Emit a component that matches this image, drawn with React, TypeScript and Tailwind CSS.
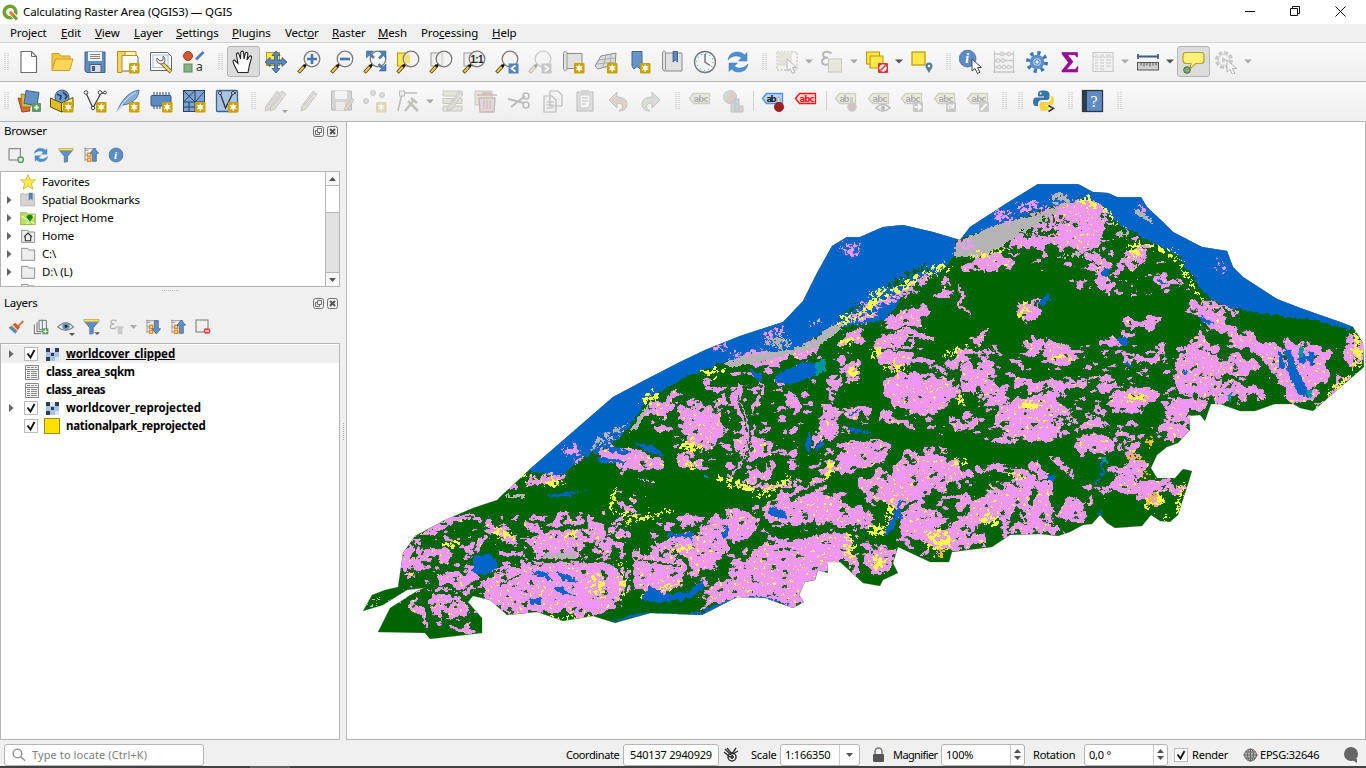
import React from 'react';

type Kids = { children?: React.ReactNode };

/* ---------- icon helpers ---------- */
const Ic = ({ children, s = 24, off = false }: Kids & { s?: number; off?: boolean }) => (
  <svg width={s} height={s} viewBox="0 0 24 24" fill="none" className={off ? 'shrink-0 opacity-35 grayscale-[40%]' : 'shrink-0'}>
    {children}
  </svg>
);
const NewBadge = () => (
  <g>
    <rect x="13" y="13" width="10.500" height="10.500" rx="1" fill="#c8a200" />
    <path d="M18.200 14.500v7.500M15 16.300l6.400 3.800M21.400 16.300L15 20.100" stroke="#fff" strokeWidth="1.100" />
    <circle cx="18.200" cy="18.200" r="1.900" stroke="#fff" strokeWidth="1" />
  </g>
);
const Lens = ({ children }: Kids) => (
  <g>
    <path d="M1.500 22.500l6.500-7" stroke="#3a3a2a" strokeWidth="3.400" />
    <path d="M2 22l4.600-5" stroke="#fbc63d" strokeWidth="2" />
    <path d="M7 16.500l3-3" stroke="#111" strokeWidth="2.400" />
    <circle cx="15" cy="9" r="7.800" fill="#f2f2f0" fillOpacity=".85" stroke="#7b7b7b" strokeWidth="1.300" />
    {children}
  </g>
);
const Refresh = () => (
  <g fill="#4f8fd0" stroke="#3a76b8" strokeWidth=".5">
    <path d="M2 10C3 4 7 2 11.500 2c3 0 5.500 1 7 3l2.500-2.500V11h-8.500l3-3C12 4.500 6 5.500 2 10z" />
    <path d="M22 14c-1 6-5 8-9.500 8-3 0-5.500-1-7-3L3 21.500V13h8.500l-3 3C12 19.500 18 18.500 22 14z" />
  </g>
);
const Pencil = ({ x = 0 }: { x?: number }) => (
  <g transform={`translate(${x} 0)`}>
    <path d="M5 17L16 2l4 3L9 20l-5 2z" fill="#b9b2a4" stroke="#7a7468" />
    <path d="M14 5l4 3" stroke="#eee" />
    <path d="M7 17L17 4" stroke="#8a8272" />
  </g>
);
const Tag = ({ c = '#8b8b5a', f = '#d3d3a8', t = 'abc', tc = '#333' }: { c?: string; f?: string; t?: string; tc?: string }) => (
  <g>
    <path d="M1.500 9.500L5.500 4.500h16v10h-16z" fill={f} stroke={c} strokeWidth="1.300" />
    <text x="5.500" y="12.500" fontSize="8.500" fontWeight="700" fill={tc} className="font-['DejaVu_Sans']" textLength={t.length > 2 ? 15 : 10}>{t}</text>
  </g>
);
const Funnel = () => (
  <g>
    <path d="M2 5h20l-7.500 9v8l-5 1v-9z" fill="#5f8fc4" stroke="#43719f" />
    <rect x="1.500" y="2" width="21" height="3.500" fill="#f7e463" stroke="#a39132" strokeWidth=".8" />
  </g>
);
const Info = () => (
  <g>
    <circle cx="12" cy="12" r="10.500" fill="#5d8cc4" stroke="#3f6ea8" />
    <text x="9" y="18" fontSize="17" fontWeight="700" fontStyle="italic" fill="#fff" className="font-['Liberation_Serif']">i</text>
  </g>
);
const Tree = ({ up }: { up?: boolean }) => (
  <g>
    <path d="M3 1v20M3 5h5M3 12h5M3 19h5" stroke="#9a9a9a" strokeWidth="1.500" />
    <path d="M2 2.500h18" stroke="#888" strokeWidth="1.200" />
    <rect x="7" y="9.500" width="4.500" height="4.500" fill="#fff" stroke="#f08a1d" strokeWidth="2.200" />
    <rect x="7" y="17" width="4.500" height="4.500" fill="#fff" stroke="#f08a1d" strokeWidth="2.200" />
    <path d={up ? 'M17 1.500l6.500 8H20v12h-6v-12h-3.500z' : 'M17 22.500l6.500-8H20v-12h-6v12h-3.500z'} fill="#5f8fc4" stroke="#34608f" />
  </g>
);
const Cursor = ({ x = 0, y = 0 }: { x?: number; y?: number }) => (
  <path transform={`translate(${x} ${y})`} d="M10 9v12l3-2.500 2.500 5 2.500-1.200-2.500-4.800h4z" fill="#fff" stroke="#444" strokeWidth="1" />
);
const Folder = () => <path d="M2.500 3.500h9l1.500 2.500h9v15.500h-19.500z" fill="#eee" stroke="#888" strokeWidth="1.400" />;
const Epsilon = () => <path d="M11.500 3.500C8 .5 3 1.500 3 4.500c0 2.500 2.500 3.200 5 3.200-3.500 0-6 1.300-6 4 0 3.500 5.500 4 9 1" stroke="#444" strokeWidth="2" />;

/* ---------- toolbar pieces ---------- */
const Btn = ({ children, on = false, off = false, arrow = '' }: Kids & { on?: boolean; off?: boolean; arrow?: '' | 'dark' | 'light' }) => (
  <div className={arrow ? 'flex w-[45px] shrink-0 items-center' : 'flex w-[33px] shrink-0 items-center'}>
    <div className={on ? 'flex h-[31px] w-[33px] items-center justify-center rounded-[3px] border border-[#b4b4b4] bg-[#dcdcdc]' : 'flex h-[31px] w-[33px] items-center justify-center'}>
      <Ic off={off}>{children}</Ic>
    </div>
    {arrow && (
      <svg width="8" height="5" className="ml-[1px]"><path d="M0 .5h8L4 4.500z" fill={arrow === 'dark' ? '#555' : '#aaa'} /></svg>
    )}
  </div>
);
const Grip = () => (
  <svg width="16" height="20" className="shrink-0">
    {[0, 2, 4, 6, 8, 10, 12, 14, 16].map((y) => (
      <g key={y} fill="#b9b9b9"><rect x="7.500" y={y + 1} width="1" height="1" /><rect x="10.500" y={y + 1} width="1" height="1" /></g>
    ))}
  </svg>
);
const Sep = () => <div className="flex w-[7px] shrink-0 justify-center"><div className="h-5 w-px bg-[#cfcfcf]" /></div>;

const Row1 = () => (
  <div className="flex h-[39px] items-center border-b border-[#b5b5b5] bg-linear-to-b from-[#fafafa] to-[#eeeeee] pb-px">
    <div className="-ml-[3.5px] flex"><Grip /></div>
    <Btn><path d="M4 1.500h10.500l5 5V22.500H4z" fill="#fff" stroke="#6f6f6f" strokeWidth="1.200" /><path d="M14.500 1.500v5h5" stroke="#6f6f6f" /></Btn>
    <Btn><path d="M2 20V3.500h7l2 2.500h9v3" fill="#f4c63d" stroke="#c99c2c" /><path d="M2 20.500L5.500 9H23l-3.500 11.500z" fill="#fcd656" stroke="#c99c2c" /></Btn>
    <Btn><path d="M2 2h20v20.500H4L2 21z" fill="#5f8cbf" stroke="#3f5f88" /><rect x="5" y="2" width="14" height="9" fill="#f2f2f2" /><path d="M7 4.500h10M7 6.500h10M7 8.500h10" stroke="#777" strokeWidth=".9" /><rect x="7" y="14.500" width="11" height="8" fill="#ddd" stroke="#46617f" /><rect x="9" y="16" width="3" height="5" fill="#3b5c86" /></Btn>
    <Btn><path d="M5 3h13l4 4v14H5z" fill="#fff" stroke="#666" /><path d="M1.500 1.500h8v4H6v17H1.500z" fill="#f5d465" stroke="#b58f1f" /><path d="M9 1.500h11v4H9z" fill="#fff3c0" stroke="#b58f1f" /><NewBadge /></Btn>
    <Btn><path d="M1.500 2.500h17l4 4v14h-21z" fill="#fff" stroke="#666" /><rect x="4" y="5" width="15" height="12.500" stroke="#9ebce0" /><path d="M12.500 12.500L22 22" stroke="#7d6b1e" strokeWidth="4" /><path d="M13 13l8.500 8.500" stroke="#f2dd85" strokeWidth="2.200" /><path d="M8 8c-1 4 2 7 5.500 5.500s3-5.500.5-7.500v4l-3 1z" fill="#f0f0f0" stroke="#666" /></Btn>
    <Btn><circle cx="6" cy="6" r="4.500" fill="#d2562f" stroke="#a8401d" /><path d="M14 9.500l7.500-7.500" stroke="#4f7db3" strokeWidth="2.600" /><rect x="2" y="14" width="8" height="8" fill="#86b285" stroke="#5a8a5a" /><text x="14" y="21" fontSize="12" fill="#333" className="font-['Noto_Sans'] leading-none">a</text></Btn>
    <Grip />
    <Btn on><path d="M7 22.500L3 14.500c-2-4-.5-5.500 1.500-3.500L7 13.500 5.500 5c-.4-2.500 2-3 2.600-.6L9.500 9 9.800 2.800c.1-2.300 2.700-2.200 2.800 0L13 9l1.200-5.200c.6-2.200 2.900-1.500 2.600.5L16 10l2.200-3.300c1.200-1.700 2.900-.6 2.200 1.200L18.500 15 17 22.500z" fill="#fff" stroke="#222" strokeWidth="1.100" /></Btn>
    <Btn><rect x="2.500" y="2.500" width="13" height="13" fill="#fde74c" stroke="#b89a00" /><path d="M12 1l4 4.500h-2.500V10H18V7.500l5 4.500-5 4.500V14h-4.500v4.500H16L12 23l-4-4.500h2.500V14H6v2.500L1 12l5-4.500V10h4.500V5.500H8z" fill="#5b87bd" stroke="#2f567f" strokeWidth=".8" /></Btn>
    <Btn><Lens><path d="M15 4v10M10 9h10" stroke="#4277b3" strokeWidth="2.600" /></Lens></Btn>
    <Btn><Lens><path d="M10 9h10" stroke="#4277b3" strokeWidth="2.600" /></Lens></Btn>
    <Btn><Lens /><path d="M3.500 1h7L8 3.500 11.500 7 10 8.500 6.500 5 3.500 8zM23 1v7l-2.500-2.500L17 9l-1.500-1.500L19 4l-3-3zM23 21h-7l2.500-2.500L15 15l1.500-1.500L20 17l3-3z" fill="#4f80b8" stroke="#2f5b8c" strokeWidth=".5" /></Btn>
    <Btn><rect x="1.500" y="3" width="12" height="13" fill="#fde74c" stroke="#b89a00" /><Lens><path d="M9 5h5v8H9z" fill="#f2dd78" /></Lens></Btn>
    <Btn><rect x="2" y="3" width="12" height="13" fill="#eee" stroke="#999" /><Lens><path d="M13 3v12" stroke="#ccc" /></Lens></Btn>
    <Btn><rect x="2" y="3" width="12" height="13" fill="#eee" stroke="#999" /><Lens><text x="8.500" y="12.500" fontSize="10" fontWeight="700" fill="#222" textLength="13" className="font-['Liberation_Sans']">1:1</text></Lens></Btn>
    <Btn><Lens /><rect x="13.500" y="13.500" width="10" height="10" fill="#5182bb" /><path d="M20.500 15.500l-4 3 4 3" stroke="#fff" strokeWidth="1.800" /></Btn>
    <Btn off><Lens /><rect x="13.500" y="13.500" width="10" height="10" fill="#777" /><path d="M16.500 15.500l4 3-4 3" stroke="#fff" strokeWidth="1.800" /></Btn>
    <Btn><path d="M2.500 3.500c0-3 3.500-2.500 3.500 0h15v15H6c0 3-3.500 3-3.500 0z" fill="#e1e1e1" stroke="#8b8b8b" /><path d="M6 3.500v15" stroke="#999" /><NewBadge /></Btn>
    <Btn><path d="M1 16L7 6l15-3-1 13-10 1-7 2z" fill="#ddd" stroke="#8a8a8a" /><path d="M5 10l16-2M3 14l17-2M12 5L9 17M17 4l-1 12" stroke="#aaa" /><NewBadge /></Btn>
    <Btn><path d="M5 1.500h10V20l-5-3.500L7 19l-2-3z" fill="#6793c8" stroke="#41698f" /><NewBadge /></Btn>
    <Btn><path d="M2.500 3c0-2.500 3-2.500 3 0h16.500v18H4l-1.500-2z" fill="#e1e1e1" stroke="#8b8b8b" /><path d="M5.500 3v17" stroke="#999" /><path d="M13 1.500h4.500V12l-2.200-2L13 12z" fill="#5b8ac0" stroke="#2f567f" strokeWidth=".8" /></Btn>
    <Btn><circle cx="12" cy="12" r="10.500" fill="#f4f4f4" stroke="#777" strokeWidth="1.300" /><circle cx="12" cy="12" r="8.300" stroke="#6fa0d6" strokeWidth="1.200" strokeDasharray="1 3.350" /><path d="M12 4v8l5 3.500" stroke="#777" strokeWidth="1.500" /></Btn>
    <Btn><Refresh /></Btn>
    <Grip />
    <Btn off arrow="light"><rect x="2" y="2" width="20" height="18" stroke="#444" strokeDasharray="2 1.500" /><rect x="2" y="2" width="15" height="14" fill="#c9c79c" /><Cursor x={2} /></Btn>
    <Btn off arrow="light"><Epsilon /><rect x="8.500" y="9" width="13" height="13" fill="#d5d3a0" stroke="#777" /></Btn>
    <Btn arrow="dark"><rect x="1.500" y="2" width="13" height="12" fill="#fde74c" stroke="#b89a00" /><rect x="5" y="6" width="13" height="12" fill="#fde74c" stroke="#b89a00" /><rect x="13" y="13" width="10" height="10" rx="1" fill="#d8333a" /><circle cx="18" cy="18" r="3.300" fill="#fff" stroke="#ffdada" /><path d="M15.500 20.500l5-5" stroke="#d8333a" strokeWidth="1.600" /></Btn>
    <Btn><rect x="2" y="2" width="13" height="13" fill="#fde74c" stroke="#b89a00" strokeWidth="1.200" /><path d="M19 23c-1.500-3-3.500-4.500-3.500-7a3.500 3.500 0 017 0c0 2.500-2 4-3.500 7z" fill="#55809d" /><circle cx="19" cy="16" r="1.200" fill="#fff" /></Btn>
    <Grip />
    <Btn><g transform="translate(-1 -1) scale(.8)"><Info /></g><Cursor x={3} /></Btn>
    <Btn off><path d="M2.500 1v22M21.500 1v22M1 22h22M2.500 4h19M2.500 10.500h19M2.500 17h19" stroke="#777" strokeWidth="1.300" /><g fill="#ddd" stroke="#777"><circle cx="10" cy="4" r="2" fill="#e8b0b0" /><circle cx="17" cy="4" r="2" fill="#e8b0b0" /><circle cx="6" cy="10.500" r="2" fill="#b0d8b0" /><circle cx="11" cy="10.500" r="2" fill="#b0d8b0" /><circle cx="7" cy="17" r="2" /><circle cx="12" cy="17" r="2" /><circle cx="17" cy="17" r="2" /></g></Btn>
    <Btn><circle cx="12" cy="12" r="9" stroke="#3f76b7" strokeWidth="4" strokeDasharray="3.200 3.870" /><circle cx="12" cy="12" r="5.500" fill="#b9d2ef" stroke="#5c90cc" strokeWidth="3.500" /><circle cx="12" cy="12" r="2.200" fill="#f5f5f5" stroke="#3f76b7" /></Btn>
    <Btn><path d="M4 2.500h15.500V7h-1c-.5-2-1.500-2.300-3-2.300H9.500l5.500 7-6.500 7.800h7.500c2 0 2.500-1 3-2.700h1L19.500 22H4v-1.500L10.500 12.500 4 4z" fill="#a1069c" stroke="#6e006b" strokeWidth=".5" /></Btn>
    <Btn off arrow="light"><rect x="2" y="2.500" width="20" height="19" fill="#eee" stroke="#777" /><path d="M2 7h20M4 5h3M9 5h4M15 5h5M4 10h3M9 10h4M15 10h5M4 13h3M9 13h4M15 13h5M4 16h3M9 16h4M15 16h5M4 19h3M9 19h4" stroke="#777" /></Btn>
    <Btn arrow="dark"><path d="M2 6.500h20M2 4v5M22 4v5" stroke="#3f5f85" strokeWidth="1.800" /><rect x="1.500" y="12.500" width="21" height="7.500" fill="#cfcfcf" stroke="#555" /><path d="M5 12.500v3M8 12.500v4M11 12.500v3M14 12.500v4M17 12.500v3M20 12.500v3" stroke="#555" /></Btn>
    <Btn on><path d="M5 2.500h15q3 0 3 3v5q0 3-3 3h-5l-6 5 1-5H5q-3 0-3-3v-5q0-3 3-3z" fill="#fdf07a" stroke="#b0a136" strokeWidth="1.200" /><circle cx="6" cy="20" r="3.300" fill="#7cac72" stroke="#44693c" /></Btn>
    <Btn off arrow="light"><circle cx="10" cy="10" r="7.500" stroke="#777" strokeWidth="3" strokeDasharray="4 1.890" /><circle cx="10" cy="10" r="5.500" fill="#f4f4f4" stroke="#777" /><path d="M8 7l5 3-5 3z" fill="#777" /><Cursor x={3} y={1} /></Btn>
  </div>
);

const Row2 = () => (
  <div className="flex h-[40px] items-center border-b border-[#b5b5b5] bg-linear-to-b from-[#fafafa] to-[#eeeeee] pb-px">
    <div className="-ml-[3.5px] flex"><Grip /></div>
    <Btn><path d="M1 9l11 2 1 11-8 1z" fill="#d36a3a" stroke="#9d4b24" /><path d="M4 5l10 1v12H5z" fill="#e2b93d" stroke="#9a7b17" /><path d="M9 1.500l13 2-2 13-13-2z" fill="#6590c5" stroke="#3d648f" /><rect x="15" y="14" width="9" height="9" rx="1" fill="#5a9b63" /><path d="M19.500 16v5M17 18.500h5" stroke="#fff" strokeWidth="1.600" /></Btn>
    <Btn><circle cx="12" cy="8" r="7" fill="#6d9bd0" stroke="#375877" /><path d="M7 5l4 2-1 4M13 3l4 4-2 3" stroke="#2e4764" strokeWidth="1.800" /><path d="M.5 9l11 5v9L.5 18z" fill="#e2bb20" stroke="#5e4e0c" /><path d="M11.500 14L23 8.500V18l-11.500 5z" fill="#fbe96b" stroke="#5e4e0c" /><NewBadge /></Btn>
    <Btn><path d="M3 4l7 15 8-15M18 4h4" stroke="#444" strokeWidth="1.300" /><g fill="#fff" stroke="#444"><circle cx="3" cy="3.500" r="1.800" /><circle cx="10" cy="19" r="1.800" /><circle cx="17" cy="3.500" r="1.800" /><circle cx="22" cy="3.500" r="1.400" /></g><NewBadge /></Btn>
    <Btn><path d="M1 23C5 12 12 3 23 1c0 8-7 14-16 15" fill="#86acd8" stroke="#4b759f" /><path d="M1 23C6 14 13 7 20 3" stroke="#dce9f7" /><NewBadge /></Btn>
    <Btn><path d="M5 3v17M8 3v17M11 3v17M14 3v17M17 3v17M20 3v17" stroke="#46617f" strokeWidth="1.200" /><rect x="2" y="6.500" width="20" height="10.500" rx="1" fill="#5c8bc2" stroke="#38597f" /><NewBadge /></Btn>
    <Btn><rect x="1.500" y="1.500" width="21" height="21" fill="#7ba3d3" stroke="#29435f" /><path d="M1.500 13h21M13 1.500v21M1.500 1.500L13 13M13 1.500L1.500 13M13 13l9-10M7 13v10M1.500 18H13" stroke="#29435f" strokeWidth="1" /><NewBadge /></Btn>
    <Btn><rect x="1.500" y="1.500" width="21" height="21" rx="1" fill="#a9c4e4" stroke="#3d648f" strokeWidth="1.300" /><path d="M5 4l5.500 15L18 4h3" stroke="#333" strokeWidth="1.300" /><circle cx="5" cy="4" r="1.500" fill="#fff" stroke="#333" /><circle cx="18" cy="4" r="1.500" fill="#fff" stroke="#333" /><NewBadge /></Btn>
    <Grip />
    <Btn off><Pencil x={-3} /><Pencil x={2} /><path d="M18 21h6l-3 3z" fill="#111" /></Btn>
    <Btn off><Pencil /></Btn>
    <Btn off><path d="M1.500 2h20v19h-20z" fill="#999" stroke="#555" /><rect x="5" y="2" width="12" height="8" fill="#eee" /><rect x="6" y="13" width="9" height="8" fill="#ddd" /><path d="M14 20l8-11 2 2-8 11z" fill="#c97" stroke="#765" /></Btn>
    <Btn off><g fill="#aaa" stroke="#777"><circle cx="3" cy="12" r="2.500" /><circle cx="10" cy="4" r="2.500" /><circle cx="19" cy="6" r="2.500" /></g><NewBadge /></Btn>
    <Btn off arrow="light"><path d="M2 22L6 4h15" stroke="#555" strokeWidth="1.500" /><rect x="3.500" y="2" width="5" height="5" fill="#ddd" stroke="#555" /><path d="M9 22l9-11M12 12l10 10M15 9l6 5" stroke="#665" strokeWidth="2.500" /></Btn>
    <Btn off><path d="M2 2h19v5H2zM2 9.500h19v5H2zM2 17h19v5H2z" fill="#c9c58e" stroke="#777" /><Pencil x={2} /></Btn>
    <Btn off><path d="M1 2h17v14H1z" fill="#c9c58e" stroke="#777" /><path d="M5 9h16l-1 14H6zM3 6h20M9 6V4h8v2" fill="#dba0a0" stroke="#944" strokeWidth="1.400" /><path d="M10 11v9M13 11v9M16 11v9" stroke="#944" /></Btn>
    <Btn off><path d="M1 10l16 4M4 18L18 7" stroke="#555" strokeWidth="2" /><circle cx="19" cy="7" r="3" stroke="#555" strokeWidth="1.600" /><circle cx="19" cy="16" r="3" stroke="#555" strokeWidth="1.600" /></Btn>
    <Btn off><path d="M10 2h8l4 4v11H10zM4 7h8l4 4v12H4z" fill="#eee" stroke="#555" strokeWidth="1.200" /><path d="M6.500 13h7M6.500 16h7M6.500 19h7" stroke="#555" /></Btn>
    <Btn off><rect x="4" y="3" width="16" height="19" fill="#bbb" stroke="#555" /><path d="M7 6h10v10l-3 3H7z" fill="#fff" stroke="#777" /><rect x="8" y="1" width="8" height="4" fill="#999" /><path d="M9 9h6M9 12h6M9 15h4" stroke="#555" /></Btn>
    <Btn off><path d="M3 11l8-8v5c8 0 10 4 10 8-.5 4-4 6-8 6 5-3 5-8-2-8v5z" fill="#c0907a" stroke="#765" /></Btn>
    <Btn off><path d="M21 11l-8-8v5C5 8 3 12 3 16c.5 4 4 6 8 6-5-3-5-8 2-8v5z" fill="#99b996" stroke="#676" /></Btn>
    <Grip />
    <Btn off><Tag /></Btn>
    <Btn off><circle cx="9" cy="8" r="6.500" fill="#c77" stroke="#777" /><path d="M9 8V1.500A6.500 6.500 0 003 11z" fill="#7a8" /><path d="M10 13h4v10h-4z" fill="#7a8" stroke="#676" /><path d="M14 10h4v13h-4z" fill="#79a" stroke="#667" /><path d="M18 17h4v6h-4z" fill="#c88" stroke="#766" /></Btn>
    <Sep />
    <Btn><Tag c="#4d94e0" f="#b5d5fa" t="ab" tc="#222" /><rect x="16" y="8" width="3" height="7" rx="1.500" fill="#ddd" stroke="#888" strokeWidth=".6" /><circle cx="18" cy="18" r="4.700" fill="#a01f22" stroke="#711" strokeWidth=".6" /></Btn>
    <Btn><Tag c="#f01414" f="#ffd9d9" tc="#f01414" /></Btn>
    <Sep />
    <Btn off><Tag t="ab" /><circle cx="18" cy="18" r="4.700" fill="#a66" /><rect x="16" y="8" width="3" height="7" fill="#888" /></Btn>
    <Btn off><Tag /><path d="M9 19q7-7 14 0q-7 6-14 0z" fill="#eee" stroke="#555" strokeWidth="1.400" /><circle cx="16" cy="19" r="2" fill="#444" /></Btn>
    <Btn off><Tag /><rect x="13" y="13" width="10" height="10" rx="1" fill="#777" /><path d="M14.500 18h6M18 15l3 3-3 3" stroke="#fff" strokeWidth="1.800" /></Btn>
    <Btn off><Tag /><rect x="13" y="13" width="10" height="10" rx="1" fill="#777" /><path d="M16 20.500c-2-4 1-6 4-3M20.500 15v3.500H17" stroke="#fff" strokeWidth="1.500" /></Btn>
    <Btn off><Tag /><rect x="13" y="13" width="10" height="10" rx="1" fill="#887" /><path d="M15 21l5.500-6" stroke="#fff" strokeWidth="2" /></Btn>
    <Grip />
    <Grip />
    <div className="w-[1px] shrink-0" />
    <Btn><path d="M11 1.500c-4 0-5 1.500-5 3.500v2.500h6v1H4c-2 0-3 2-3 4.500S2 17 4 17h2v-2.500C6 12.500 8 11 10 11h5c1.500 0 2.500-1.500 2.500-2.500V5c0-2-2-3.500-6.500-3.500z" fill="#3b76a8" /><circle cx="8.700" cy="4.500" r="1" fill="#fff" /><path d="M19 7v2.500c0 2-1.500 3.500-3.500 3.500h-5C8.500 13 7.500 14 7.500 15.500V19c0 2 2.500 3 5 3s4.500-1 4.500-3v-2h-4v-1h6c2.500 0 3-2 3-4.500S21.500 7 19 7z" fill="#ffd340" /><path d="M16.500 16.500l5 3-5 3" stroke="#333" strokeWidth="1.500" /></Btn>
    <Grip />
    <Btn><rect x="1.500" y="1.500" width="20" height="21" fill="#5e8bc2" stroke="#33373d" strokeWidth="1.300" /><rect x="2" y="2" width="4" height="20" fill="#2c3e50" /><text x="9.500" y="18" fontSize="16" fill="#fff" className="font-['Liberation_Serif']">?</text></Btn>
    <Grip />
  </div>
);

/* ---------- map ---------- */
const OUTLINE =
  '363,611 372,595 385,590 398,587 403,553 415,536 445,520 473,508 497,500 530,469 583,423 613,397 645,380 680,362 705,350 740,336 783,322 803,301 817,273 832,246 847,237 860,237 883,227 903,225 933,232 960,240 970,227 1007,203 1038,184 1078,184 1093,192 1108,193 1117,197 1141,197 1147,207 1163,222 1173,232 1202,247 1227,251 1233,267 1243,277 1277,299 1303,309 1343,323 1353,327 1363,343 1364,367 1313,411 1300,408 1293,404 1275,404 1255,411 1240,411 1220,404 1211,404 1205,421 1200,415 1189,416 1190,430 1178,443 1167,447 1157,455 1151,468 1157,478 1175,478 1183,469 1192,471 1187,487 1178,515 1170,522 1160,521 1151,515 1142,526 1115,528 1107,523 1100,515 1092,524 1083,525 1070,532 1058,536 1040,534 1010,535 992,547 952,552 949,562 930,562 898,547 893,563 898,573 883,580 880,586 863,583 852,573 840,562 827,562 828,573 818,570 815,580 805,582 799,595 804,602 793,608 765,598 737,597 702,615 650,613 615,623 593,616 563,621 537,612 507,615 490,600 473,596 468,602 482,618 482,633 430,639 425,633 378,632 390,608 417,591 424,588 407,590 383,605';

const RIVER = [
  '525,465 583,415 640,375 783,315 800,295 830,240 903,220 955,236 958,252 940,272 913,283 900,300 885,320 850,326 825,332 795,350 723,363 703,369 680,380 662,391 645,403 633,422 610,447 580,458 562,476 530,471',
  '957,240 970,225 1038,180 1150,190 1240,250 1250,280 1360,325 1350,330 1320,321 1287,317 1227,307 1207,297 1190,272 1180,258 1153,242 1117,224 1100,203 1083,199 1050,207 1020,218 990,228',
];

type E = [number, number, number, number, number?];
const CROPS: E[] = [
  [438, 600, 9, 13], [458, 606, 10, 13], [462, 580, 26, 9], [655, 575, 31, 23], [680, 545, 24, 9], [688, 521, 14, 6],
  [408, 556, 6, 20, 15], [447, 525, 29, 4, -22], [435, 554, 18, 6], [477, 543, 5, 9, 30], [503, 535, 17, 6, 25], [533, 528, 11, 4, 25],
  [563, 518, 8, 4], [595, 530, 8, 14], [617, 530, 8, 5], [612, 547, 14, 7], [515, 489, 20, 7], [548, 480, 20, 6, -5],
  [630, 458, 31, 10, 12], [664, 429, 11, 4], [660, 407, 17, 7, -30], [410, 577, 7, 3, -40], [421, 612, 5, 16, -22], [460, 630, 9, 3],
  [572, 452, 8, 4], [703, 428, 24, 19], [690, 462, 15, 5, 20], [755, 447, 20, 12], [757, 474, 20, 6, -15], [740, 412, 4, 20, -15], [750, 440, 3, 18, 15],
  [762, 487, 32, 3, 0], [720, 396, 4, 9], [738, 400, 5, 14], [758, 400, 4, 15, 25], [792, 405, 6, 11, 15],
  [800, 350, 24, 8, -20], [775, 358, 30, 6, -8], [908, 318, 26, 8, -18], [902, 338, 28, 8, -10], [853, 338, 16, 7, -20],
  [895, 358, 18, 8], [915, 390, 35, 17, 12], [940, 385, 16, 11], [975, 377, 18, 14, -40], [957, 362, 14, 6, -15], [833, 380, 9, 6],
  [852, 370, 6, 10], [700, 412, 22, 9], [830, 413, 12, 5], [858, 412, 12, 6], [990, 262, 25, 9, -8], [965, 300, 3, 16, -18],
  [1030, 310, 15, 6, -30], [942, 290, 9, 5], [980, 335, 11, 4, -20], [985, 352, 10, 5], [1000, 400, 9, 13], [1030, 405, 20, 9], [1035, 345, 10, 7],
  [1092, 256, 10, 8], [1102, 270, 6, 10], [1106, 284, 11, 7], [1133, 258, 18, 9], [1163, 280, 9, 5], [1140, 322, 19, 5], [1213, 320, 29, 10, 28],
  [1218, 306, 18, 3, 10], [1110, 344, 14, 7], [1128, 336, 9, 4], [1060, 352, 17, 8], [1037, 344, 11, 8], [1137, 362, 13, 7], [1157, 360, 8, 7],
  [1200, 370, 26, 27], [1237, 367, 20, 10], [1235, 393, 33, 8], [1250, 344, 24, 7, 18], [1353, 353, 7, 17], [1335, 390, 3, 26, 42],
  [1107, 382, 16, 6, 10], [1060, 386, 30, 6, -5], [1133, 400, 23, 10], [1183, 408, 22, 10, -15], [1200, 340, 6, 8], [1030, 382, 20, 5],
  [1035, 418, 36, 22], [1092, 420, 19, 8, -15], [1175, 428, 14, 14], [1097, 447, 20, 9], [1122, 438, 11, 5], [1052, 468, 20, 11, 12],
  [1133, 452, 10, 7], [1128, 469, 17, 9], [1137, 488, 30, 10, 8], [1170, 484, 14, 5], [1035, 500, 17, 24], [1076, 502, 19, 10, -35], [1065, 515, 23, 6],
  [1105, 492, 7, 4], [1035, 527, 25, 8], [867, 450, 23, 14], [843, 463, 20, 12, -20], [823, 430, 7, 20, 20], [837, 418, 3, 15, 22], [927, 472, 38, 19],
  [893, 488, 33, 17], [800, 507, 40, 15, -12], [845, 517, 27, 12], [735, 523, 24, 14], [920, 522, 23, 15], [705, 550, 22, 22], [880, 560, 15, 13],
  [855, 565, 7, 14], [955, 540, 33, 9], [1000, 500, 40, 14, -10], [1015, 417, 19, 15], [963, 425, 15, 6], [915, 405, 27, 8], [1005, 442, 11, 6],
  [937, 445, 9, 5], [873, 427, 8, 6], [810, 488, 18, 7, -20], [990, 470, 12, 4], [1020, 475, 12, 7], [897, 420, 20, 3, 25], [975, 520, 26, 8, -20],
  [645, 490, 10, 5], [630, 506, 10, 5], [1153, 505, 9, 8], [985, 385, 10, 14], [1163, 350, 6, 4],
];
const CROP_AREAS = [
  '498,566 530,563 597,559 617,564 625,580 621,602 603,614 563,614 537,612 507,616 488,602 480,588',
  '530,543 545,535 578,531 586,545 586,559 530,560',
  '1010,237 1047,208 1083,197 1100,203 1111,220 1102,242 1080,252 1050,248 1008,247',
  '1266,343 1287,340 1310,346 1314,354 1334,346 1327,378 1312,403 1297,409 1281,390 1268,365',
  '698,612 720,575 745,556 785,537 830,530 852,540 852,562 830,567 817,584 800,602 793,614 765,602 737,600 712,608',
];
const GRASS: E[] = [
  [650, 398, 9, 5, -25], [553, 483, 10, 4], [527, 478, 6, 3], [850, 545, 3, 12], [880, 562, 6, 9], [940, 540, 14, 10], [890, 512, 3, 16, 15],
  [690, 447, 9, 7], [740, 485, 24, 3, 18], [775, 487, 22, 3, -30], [690, 465, 7, 4], [877, 353, 6, 5], [895, 368, 12, 4], [853, 372, 5, 8, -20],
  [846, 320, 5, 8, 20], [870, 305, 26, 3, -45], [897, 290, 30, 4, -30], [930, 272, 22, 4, -20], [873, 304, 4, 14, 10], [712, 372, 12, 3], [846, 342, 7, 4],
  [990, 253, 20, 2, -10], [1090, 202, 10, 4, 15], [1110, 215, 12, 2, 50], [1163, 250, 18, 3, 15], [1136, 250, 6, 8], [1185, 272, 18, 1.500, 58], [1195, 290, 14, 1.500, 52],
  [1357, 350, 4, 17], [1335, 392, 2, 28, 42], [1157, 500, 8, 6], [1147, 505, 5, 4], [1180, 500, 2, 18, 15], [1168, 521, 8, 2],
  [1060, 357, 13, 2], [1030, 405, 10, 4], [1138, 398, 12, 4], [960, 462, 8, 4], [875, 530, 9, 6], [680, 548, 12, 3], [613, 500, 2, 14], [650, 516, 26, 2, -15],
  [630, 515, 15, 2, 15], [505, 535, 12, 4, 25], [450, 545, 9, 4], [570, 535, 8, 3], [830, 470, 4, 10, 20], [1015, 475, 7, 3, 45], [1025, 310, 3, 10, 30],
  [622, 580, 2, 20], [660, 590, 25, 2, -20], [570, 618, 30, 1], [960, 350, 18, 2, -15], [990, 520, 10, 5], [597, 585, 8, 10], [960, 400, 4, 6],
];
const PONDS = [
  '473,555 480,556 488,553 498,563 492,572 482,576 473,570', '529,598 541,598 541,605 530,604', '555,572 570,575 580,583 560,578', '553,587 562,588 578,598 558,592',
  '530,570 545,572 553,581 540,577', '640,600 650,585 665,595 688,592 698,584 702,578 703,587 692,598 660,602', '596,457 620,460 625,464 600,462', '607,447 625,448 630,454 612,453',
  '635,443 655,446 663,455 648,453', '690,535 695,533 690,542', '668,534 695,533 693,537 668,537', '768,506 786,512 785,518 770,516',
  '775,376 790,368 805,362 822,366 815,376 790,384 776,382', '847,427 862,430 873,434 850,431', '848,415 862,408 852,416', '900,500 901,517 892,530 884,536 894,515',
  '808,430 811,434 810,452 806,450', '820,440 823,446 815,452', '1278,352 1284,355 1285,369 1279,366', '1286,347 1292,352 1297,370 1308,390 1309,398 1298,394 1287,370',
  '1300,352 1308,356 1305,362 1298,362', '1310,352 1315,356 1311,366 1306,360', '1118,337 1129,340 1126,347 1119,344', '1048,292 1050,300 1042,307 1038,302',
  '1045,473 1055,477 1054,481 1046,479', '1097,480 1102,477 1096,485', '1102,457 1104,473 1100,478', '1100,512 1102,517 1096,515', '1201,316 1214,323 1210,325 1200,320',
  '1156,278 1168,283 1160,284', '585,491 592,488 575,494 548,497 548,495', '1124,362 1130,361 1131,366 1125,366', '1183,370 1187,370 1187,375 1183,375', '612,622 640,612 680,614 700,612 735,598 765,597 793,607 765,600 737,600 702,617 650,615',
  '750,370 762,374 760,381 752,376', '722,538 726,525 729,525 726,538', '1112,268 1106,279 1100,275 1104,268',
];
const BARE = [
  '957,243 990,227 1040,213 1060,207 1045,222 1005,243 985,256 953,257', '723,364 753,352 790,350 818,338 805,350 760,362 733,367',
  '545,553 575,552 575,559 545,558', '632,428 645,407 652,402 640,423 628,435', '1133,208 1142,212 1155,224 1140,217', '507,495 525,494 524,497 506,497', '825,330 850,318 840,330 820,345 805,352',
];

const Ell = ({ e }: { e: E }) => <ellipse cx={e[0]} cy={e[1]} rx={e[2]} ry={e[3]} transform={`rotate(${e[4] ?? 0} ${e[0]} ${e[1]})`} />;
const area = { filterUnits: 'userSpaceOnUse' as const, x: 347, y: 122, width: 1018, height: 618, colorInterpolationFilters: 'sRGB' as const };

const LandCover = () => (
  <svg width="1018" height="618" viewBox="347 122 1018 618" shapeRendering="crispEdges" className="block">
    <defs>
      <clipPath id="park"><polygon points={OUTLINE} /></clipPath>
      <filter id="field" {...area}>
        <feTurbulence type="fractalNoise" baseFrequency=".07" numOctaves="4" seed="4" result="n" />
        <feDisplacementMap in="SourceGraphic" in2="n" scale="25" xChannelSelector="R" yChannelSelector="G" result="d" />
        <feTurbulence type="fractalNoise" baseFrequency=".1 .15" numOctaves="5" seed="9" />
        <feColorMatrix values="0 0 0 0 0  0 0 0 0 0  0 0 0 0 0  90 0 0 0 -63" result="h" />
        <feComposite in="d" in2="h" operator="out" result="p" />
        <feTurbulence type="fractalNoise" baseFrequency=".3" numOctaves="3" seed="21" />
        <feColorMatrix values="0 0 0 0 1  0 0 0 0 1  0 0 0 0 .3  0 90 0 0 -62" result="y" />
        <feComposite in="y" in2="p" operator="in" result="yy" />
        <feMerge><feMergeNode in="p" /><feMergeNode in="yy" /></feMerge>
      </filter>
      <filter id="scatter" {...area}>
        <feTurbulence type="fractalNoise" baseFrequency=".08 .14" numOctaves="5" seed="33" />
        <feColorMatrix values="0 0 0 0 .94  0 0 0 0 .59  0 0 0 0 1  90 0 0 0 -57" result="s" />
        <feComposite in="s" in2="SourceGraphic" operator="in" />
      </filter>
      <filter id="rough" {...area}>
        <feTurbulence type="fractalNoise" baseFrequency=".2" numOctaves="3" seed="5" result="n" />
        <feDisplacementMap in="SourceGraphic" in2="n" scale="7" xChannelSelector="R" yChannelSelector="G" />
      </filter>
      <filter id="tuft" {...area}>
        <feTurbulence type="fractalNoise" baseFrequency=".22" numOctaves="3" seed="12" result="n" />
        <feDisplacementMap in="SourceGraphic" in2="n" scale="15" xChannelSelector="R" yChannelSelector="G" result="d" />
        <feColorMatrix in="n" values="0 0 0 0 0  0 0 0 0 0  0 0 0 0 0  0 0 90 0 -48" result="h" />
        <feComposite in="d" in2="h" operator="out" />
      </filter>
    </defs>
    <g clipPath="url(#park)">
      <rect x="347" y="122" width="1018" height="618" fill="#006400" />
      <g filter="url(#scatter)">
        <polygon points="900,345 1190,345 1200,405 1180,440 1080,440 900,440" />
        <polygon points="640,525 900,480 1020,460 1060,535 900,560 700,600" />
        <polygon points="670,385 850,350 850,470 670,470" />
        <polygon points="410,520 620,510 640,560 410,600" />
        <polygon points="960,210 1110,200 1190,290 1100,300 1000,250" />
        <ellipse cx="633" cy="500" rx="20" ry="16" />
        <polygon points="420,590 482,590 482,636 440,630" />
      </g>
      <g filter="url(#field)" fill="#f096ff">
        {CROP_AREAS.map((p) => <polygon key={p} points={p} />)}
        {CROPS.map((e, i) => <Ell key={i} e={e} />)}
      </g>
      <g fill="none" stroke="#006400" filter="url(#rough)">
        <path d="M530 561L590 560 615 562 625 580 625 605" strokeWidth="3" />
        <path d="M740 395C745 420 752 425 748 450 740 470 730 478 715 480" strokeWidth="5" />
        <path d="M760 520C780 545 810 535 830 525" strokeWidth="8" />
        <path d="M830 525S860 540 900 542" strokeWidth="4" />
        <path d="M860 430Q940 440 1040 455 1060 480 1090 500" strokeWidth="13" />
        <path d="M500 500L600 480 680 495 740 500" strokeWidth="16" />
        <path d="M840 475L790 500" strokeWidth="5" />
        <path d="M860 545L862 575 880 582" strokeWidth="5" />
        <path d="M722 560L724 580" strokeWidth="12" />
        <path d="M400 600C440 585 460 600 470 585L500 570" strokeWidth="2.500" />
        <path d="M1010 372L1060 376 1120 372M1060 395L1090 410 1120 430" strokeWidth="4" />
        <path d="M630 545L632 600" strokeWidth="4" />
        <path d="M925 500L960 490M1060 490L1055 515M1035 490L1030 505M905 455L915 465M960 480L975 500" strokeWidth="4" />
        <path d="M500 585L520 575M640 560L680 566M1215 380L1255 376M1205 352L1230 356" strokeWidth="2" />
      </g>
      <path d="M741 385C735 405 750 415 748 430 750 450 742 468 728 478" fill="none" stroke="#f096ff" strokeWidth="2" filter="url(#rough)" />
      <g filter="url(#rough)" fill="#0064c8">{RIVER.map((p) => <polygon key={p} points={p} />)}</g>
      <g filter="url(#rough)" fill="#b4b4b4">{BARE.map((p) => <polygon key={p} points={p} />)}</g>
      <g filter="url(#tuft)" fill="#f096ff">
        <ellipse cx="851" cy="249" rx="9" ry="7" /><ellipse cx="572" cy="451" rx="9" ry="5" /><ellipse cx="1003" cy="217" rx="12" ry="6" />
        <ellipse cx="1030" cy="207" rx="14" ry="5" /><ellipse cx="775" cy="333" rx="10" ry="4" transform="rotate(-20 775 333)" />
        <ellipse cx="720" cy="347" rx="9" ry="3" /><ellipse cx="865" cy="312" rx="18" ry="9" transform="rotate(-30 865 312)" />
        <ellipse cx="905" cy="288" rx="30" ry="7" transform="rotate(-30 905 288)" /><ellipse cx="965" cy="243" rx="8" ry="8" />
        <ellipse cx="1147" cy="207" rx="5" ry="2" /><ellipse cx="1220" cy="265" rx="2" ry="7" transform="rotate(-30 1220 265)" /><ellipse cx="750" cy="354" rx="20" ry="3" transform="rotate(-6 750 354)" />
        <ellipse cx="400" cy="597" rx="16" ry="2" transform="rotate(-25 400 597)" />
      </g>
      <g filter="url(#tuft)" fill="#006400">
        <ellipse cx="905" cy="279" rx="26" ry="5" transform="rotate(-30 905 279)" /><ellipse cx="850" cy="312" rx="14" ry="4" transform="rotate(-35 850 312)" />
        <ellipse cx="1052" cy="222" rx="14" ry="4" /><ellipse cx="1040" cy="233" rx="20" ry="3" /><ellipse cx="1060" cy="420" rx="12" ry="3" />
      </g>
      <g filter="url(#tuft)" fill="#b4b4b4">
        <ellipse cx="608" cy="438" rx="22" ry="4" transform="rotate(-35 608 438)" /><ellipse cx="1060" cy="200" rx="12" ry="6" /><ellipse cx="780" cy="342" rx="14" ry="6" />
        <ellipse cx="815" cy="322" rx="6" ry="3" /><ellipse cx="1125" cy="233" rx="5" ry="4" /><ellipse cx="1080" cy="253" rx="25" ry="1.500" transform="rotate(-12 1080 253)" />
        <ellipse cx="372" cy="602" rx="7" ry="3" />
      </g>
      <g filter="url(#tuft)" fill="#ffff4c">{GRASS.map((e, i) => <Ell key={i} e={e} />)}</g>
      <g filter="url(#rough)" fill="#0064c8">{PONDS.map((p) => <polygon key={p} points={p} />)}</g>
      <g filter="url(#rough)" fill="#0096a0">
        <polygon points="815,362 826,359 826,370 817,376" /><polygon points="1298,350 1302,347 1304,354 1300,358" /><rect x="1101" y="457" width="5" height="6" />
        <rect x="1308" y="390" width="4" height="6" /><rect x="1228" y="394" width="3" height="6" /><rect x="705" y="475" width="5" height="3" />
      </g>
      <g filter="url(#tuft)" fill="#ffbb22">
        <ellipse cx="1153" cy="500" rx="6" ry="5" /><ellipse cx="1135" cy="457" rx="7" ry="3" /><ellipse cx="1150" cy="443" rx="2" ry="6" />
        <ellipse cx="1145" cy="468" rx="2" ry="8" /><ellipse cx="940" cy="552" rx="3" ry="4" />
      </g>
    </g>
    <polygon points={OUTLINE} fill="none" stroke="#777" strokeOpacity=".35" strokeWidth=".6" />
  </svg>
);

/* ---------- panels ---------- */
const PanelTitle = ({ t }: { t: string }) => (
  <div className="flex h-[18px] items-center justify-between pr-[2px] pl-1">
    <span className="tracking-[-0.25px]">{t}</span>
    <span className="flex gap-[3px]">
      <svg width="11" height="11" fill="none" stroke="#707070"><rect x=".5" y=".5" width="10" height="10" rx="2" /><path d="M4.500 2.500h4v4h-4zM6.500 6.500v2h-4v-4h2" /></svg>
      <svg width="11" height="11" fill="none" stroke="#707070"><rect x=".5" y=".5" width="10" height="10" rx="2" /><path d="M3 3l5 5M8 3L3 8" stroke="#555" strokeWidth="2" /></svg>
    </span>
  </div>
);
const Tri = () => <svg width="5" height="8" className="shrink-0"><path d="M0 0l4.500 4L0 8z" fill="#666" /></svg>;

const BRow = ({ t, icon, tri = true }: { t: string; icon: React.ReactNode; tri?: boolean }) => (
  <div className="flex h-[18px] shrink-0 items-center">
    <span className="w-[14px] shrink-0 pl-[6px]">{tri && <Tri />}</span>
    <span className="mr-[6px] ml-[5px]"><Ic s={16}>{icon}</Ic></span>
    <span className="tracking-[-0.15px]">{t}</span>
  </div>
);

const Check = () => (
  <svg width="14" height="14" className="shrink-0"><rect x=".5" y=".5" width="13" height="13" fill="#fff" stroke="#bbb" /><path d="M3.500 6.500l3 4 4-7.500" fill="none" stroke="#111" strokeWidth="1.800" /></svg>
);
const Raster = () => (
  <svg width="13" height="13" className="shrink-0"><path d="M0 0h13v13H0z" fill="#a9c2e2" /><path d="M0 0h4v4H0zM9 0h4v4H9zM5 5h3v3H5zM0 9h4v4H0z" fill="#2c3e50" /><path d="M4 0h5v4H4zM9 9h4v4H9z" fill="#dce6f2" /></svg>
);
const Table = () => (
  <svg width="14" height="15" className="shrink-0" fill="none" stroke="#888"><path d="M.5.5h13v14H.5z" fill="#f4f4f4" /><path d="M1 4.500h12M2 2.500h3M6 2.500h3M10 2.500h2M2 6.500h3M6 6.500h6M2 8.500h3M6 8.500h6M2 10.500h3M6 10.500h6M2 12.500h3M6 12.500h6" /></svg>
);
const LRow = ({ t, kind, sel = false, track = 'tracking-[-0.25px]' }: { t: string; kind: 'raster' | 'table' | 'fill'; sel?: boolean; track?: string }) => (
  <div className={sel ? 'flex h-[18px] items-center bg-[#efefef] pl-[8px] font-bold' : 'flex h-[18px] items-center pl-[8px] font-bold'}>
    <span className="w-[15px]">{kind === 'raster' && <Tri />}</span>
    {kind === 'table' ? <span className="mr-[7px] ml-px"><Table /></span> : (
      <>
        <Check />
        <span className="ml-[5px] flex w-[23px] justify-start pl-[1px]">
          {kind === 'raster' ? <span className="pl-[2px]"><Raster /></span> : <span className="h-4 w-4 border border-[#9d8c10] bg-[#ffe000]" />}
        </span>
      </>
    )}
    <span className={sel ? `${track} underline` : track}>{t}</span>
  </div>
);
const Down = ({ up = false }: { up?: boolean }) => <svg width="7" height="4"><path d={up ? 'M0 4h7L3.500 0z' : 'M0 0h7L3.500 4z'} fill="#555" /></svg>;

const Left = () => (
  <aside className="flex w-[340px] shrink-0 flex-col">
    <PanelTitle t="Browser" />
    <div className="flex h-[31px] items-center gap-[9px] pb-[2px] pl-[8px]">
      <Ic s={16}><rect x="1.500" y="2.500" width="17" height="17" stroke="#777" strokeWidth="1.500" /><circle cx="19" cy="19" r="4" fill="#dfeedd" stroke="#5a9160" strokeWidth="2" /></Ic>
      <Ic s={16}><Refresh /></Ic>
      <Ic s={16}><Funnel /></Ic>
      <Ic s={16}><Tree up /></Ic>
      <Ic s={16}><Info /></Ic>
    </div>
    <div className="flex h-[116px] border border-[#b5b5b5] bg-white">
      <div className="flex flex-1 flex-col overflow-hidden pt-px">
        <BRow tri={false} t="Favorites" icon={<path d="M12 .8l3.300 8h8.200l-6.500 5.500 2.500 8.700-7.500-5.200L4.500 23 7 14.300.5 8.800h8.200z" fill="#fde94f" stroke="#c4a615" />} />
        <BRow t="Spatial Bookmarks" icon={<><path d="M1 3q3-3 5 0h16v18H1z" fill="#d4d4d4" stroke="#aaa" /><path d="M13 1h6v12l-3-3-3 3z" fill="#5b82ae" /></>} />
        <BRow t="Project Home" icon={<><path d="M1 4h9l2 2h11v16H1z" fill="#bfe05a" stroke="#7a9a3a" /><path d="M2 9l20 12M10 21L22 7" stroke="#fff" strokeWidth="1.500" /><path d="M15 18l-5-7c-1-4 9-6 9 0z" fill="#07870c" /></>} />
        <BRow t="Home" icon={<><Folder /><path d="M6 13.500l6-6 6 6M8 13v6h8v-6" stroke="#333" strokeWidth="1.600" /></>} />
        <BRow t="C:\" icon={<Folder />} />
        <BRow t="D:\ (L)" icon={<Folder />} />
        <BRow t="E:\ (I)" icon={<Folder />} />
      </div>
      <div className="flex w-[14px] flex-col border-l border-[#b5b5b5] bg-[#e2e2e2]">
        <div className="flex h-[14px] items-center justify-center border-b border-[#b5b5b5] bg-[#f8f8f8]"><Down up /></div>
        <div className="h-[27px] border-b border-[#b5b5b5] bg-white" />
        <div className="flex-1" />
        <div className="flex h-[14px] items-center justify-center border-t border-[#b5b5b5] bg-[#f8f8f8]"><Down /></div>
      </div>
    </div>
    <div className="flex h-[7px] items-center justify-center pb-px"><div className="w-[17px] border-t border-dotted border-[#bbb]" /></div>
    <PanelTitle t="Layers" />
    <div className="flex h-[31px] items-center pb-[2px] pl-[8px]">
      <Ic s={16}><path d="M1 13l6-5 9 6-5 8z" fill="#f5d060" /><path d="M1 13l4-3 9 8-3 4z" fill="#5389c9" /><path d="M7 8l4-2 7 6-3 5z" fill="#d84f45" /><path d="M15 11l8-8" stroke="#b98134" strokeWidth="3" /></Ic>
      <span className="ml-[9px]"><Ic s={16}><path d="M9 2h11v14H9z" fill="#f5f5f5" stroke="#666" strokeWidth="1.400" /><path d="M6 5v14h10M2 8v14h10" stroke="#666" strokeWidth="1.400" /><path d="M14 1v14" stroke="#4f7db3" strokeWidth="1.500" /><rect x="14" y="14" width="9" height="9" fill="#5a9b63" /><path d="M18.500 15.500v6M15.500 18.500h6" stroke="#fff" strokeWidth="1.500" /></Ic></span>
      <span className="ml-[8px]"><Ic s={18}><path d="M1 12Q12 1 22 12 12 21 1 12z" fill="#eee" stroke="#888" strokeWidth="1.500" /><circle cx="12" cy="11" r="5" fill="#6b93c2" /><circle cx="12" cy="11" r="2" fill="#222" /><path d="M16 20h8l-4 4z" fill="#555" /></Ic></span>
      <span className="ml-[8px]"><Ic s={17}><Funnel /><path d="M16 20h8l-4 4z" fill="#555" /></Ic></span>
      <span className="ml-[9px]"><Ic s={16} off><Epsilon /><path d="M10 11h12v3h-2v9h-7v-9h-3z" fill="#888" /></Ic></span>
      <svg width="7" height="4" className="ml-[5px]"><path d="M0 0h7L3.500 4z" fill="#aaa" /></svg>
      <span className="ml-[8px]"><Ic s={16}><Tree /></Ic></span>
      <span className="ml-[9px]"><Ic s={16}><Tree up /></Ic></span>
      <span className="ml-[9px]"><Ic s={16}><rect x="1.500" y="1.500" width="18" height="18" stroke="#777" strokeWidth="1.500" /><rect x="13" y="14" width="10" height="8" rx="3" fill="#e5484c" /><path d="M15 18h6" stroke="#fff" strokeWidth="1.800" /></Ic></span>
    </div>
    <div className="flex-1 border border-[#b5b5b5] bg-white pt-px">
      <LRow t="worldcover_clipped" kind="raster" sel track="tracking-[-0.08px]" />
      <LRow t="class_area_sqkm" kind="table" track="tracking-[-0.38px]" />
      <LRow t="class_areas" kind="table" track="tracking-[-0.42px]" />
      <LRow t="worldcover_reprojected" kind="raster" track="tracking-[-0.03px]" />
      <LRow t="nationalpark_reprojected" kind="fill" />
    </div>
  </aside>
);

const BOX = 'flex h-[22px] shrink-0 items-center rounded-[3px] border border-[#b5b5b5] bg-white';
const Spin = ({ t }: { t: string }) => (
  <div className={`${BOX} w-[84px] justify-between pl-1`}>
    <span>{t}</span>
    <span className="flex h-full w-[14px] flex-col items-center justify-center gap-[3px] border-l border-[#ccc]"><Down up /><Down /></span>
  </div>
);

const Status = () => (
  <footer className="flex h-[26px] items-center pt-[3px] text-[11px] tracking-[-0.2px]">
    <div className={`${BOX} ml-1 w-[200px] pl-[7px] tracking-[0.1px] text-[#808080]`}>
      <svg width="14" height="14" className="mr-[6px]" fill="none" stroke="#888" strokeWidth="1.300"><circle cx="5.500" cy="5.500" r="4.300" /><path d="M8.700 8.700l4.500 4" /></svg>
      Type to locate (Ctrl+K)
    </div>
    <span className="ml-[362px] w-[57px] whitespace-nowrap tracking-[-0.4px]">Coordinate</span>
    <div className={`${BOX} w-[96px] justify-center`}>540137 2940929</div>
    <span className="flex w-[32px] pl-[4px]">
      <svg width="16" height="16" fill="none" stroke="#333"><path d="M2 2l6 6M4 1l5 6M1 5l6 5M13 1l-4 6M15 4l-5 3" strokeWidth="1.400" /><circle cx="9" cy="10" r="4" strokeWidth="1.500" /><circle cx="9" cy="10" r="1.500" fill="#555" /></svg>
    </span>
    <span className="w-[29px]">Scale</span>
    <div className={`${BOX} w-[80px] justify-between pl-1`}>1:166350<span className="flex h-full w-[20px] items-center justify-center border-l border-[#ccc]"><Down /></span></div>
    <span className="flex w-[33px] justify-center pl-[4px]">
      <svg width="13" height="16"><path d="M3 8V4.500a3.500 3.500 0 017 0V8" fill="none" stroke="#777" strokeWidth="1.500" /><rect x="1" y="7" width="11" height="8" rx="1" fill="#555" /></svg>
    </span>
    <span className="w-[48px] tracking-[-0.6px]">Magnifier</span>
    <Spin t="100%" />
    <span className="ml-[8px] w-[51px]">Rotation</span>
    <Spin t="0,0 °" />
    <span className="ml-[6px] flex"><Check /></span>
    <span className="ml-[4px] w-[51px]">Render</span>
    <svg width="15" height="14" fill="none" stroke="#666"><circle cx="7.500" cy="7" r="6" fill="#bbb" /><ellipse cx="7.500" cy="7" rx="3" ry="6" /><path d="M0 7h15M2.500 4h10M2.500 10h10M7.500 1v12" /></svg>
    <span className="ml-[2px] w-[83px]">EPSG:32646</span>
    <svg width="16" height="16"><circle cx="8" cy="7" r="7" fill="#666" /><path d="M8 12h6v4z" fill="#666" /></svg>
  </footer>
);

const M = ({ children, w }: Kids & { w: string }) => <span className={`${w} shrink-0 whitespace-nowrap`}>{children}</span>;

export default function App() {
  return (
    <div className="flex h-[768px] w-[1366px] flex-col overflow-hidden bg-[#f0f0f0] font-['Noto_Sans','Open_Sans',sans-serif] text-[11.5px] leading-[18px] text-black">
      <header className="flex h-[24px] items-center bg-white pl-[2px]">
        <svg width="17" height="17" viewBox="0 0 17 17" fill="none"><circle cx="8" cy="8" r="5.800" stroke="#69a331" strokeWidth="3.600" /><path d="M8 8l7.500 7.500" stroke="#fff" strokeWidth="5" /><path d="M9.500 9.500l5.500 6" stroke="#69a331" strokeWidth="3.200" /><path d="M7.500 7.500h3.500l-3.500 3.500z" fill="#ee7913" /><path d="M8 8l3.500 3.500" stroke="#ee7913" strokeWidth="2" /></svg>
        <span className="ml-[4px] flex-1 tracking-[-0.14px]">Calculating Raster Area (QGIS3) — QGIS</span>
        <span className="mr-[20px] flex items-center gap-[35px] pb-[2px]">
          <svg width="10" height="10"><path d="M0 5.500h10" stroke="#111" /></svg>
          <svg width="10" height="10" fill="none" stroke="#111"><path d="M.5 2.500h7v7h-7zM2.500 2.500v-2h7v7h-2" /></svg>
          <svg width="11" height="11" fill="none" stroke="#111"><path d="M.5.5l10 10M10.500.5l-10 10" /></svg>
        </span>
      </header>
      <nav className="flex h-[18px] items-center pl-[10px] tracking-[-0.15px]">
        <M w="w-[51px]">Pro<u>j</u>ect</M><M w="w-[34px]"><u>E</u>dit</M><M w="w-[39px]"><u>V</u>iew</M><M w="w-[42px]"><u>L</u>ayer</M>
        <M w="w-[56px]"><u>S</u>ettings</M><M w="w-[53px]"><u>P</u>lugins</M><M w="w-[47px]">Vect<u>o</u>r</M><M w="w-[46px]"><u>R</u>aster</M>
        <M w="w-[43px]"><u>M</u>esh</M><M w="w-[71px]">Pro<u>c</u>essing</M><M w="w-[40px]"><u>H</u>elp</M>
      </nav>
      <div className="border-t border-[#d5d5d5]"><Row1 /><Row2 /></div>
      <div className="flex h-[618px]">
        <Left />
        <div className="flex w-[6px] items-center justify-center"><div className="h-[17px] border-l border-dotted border-[#aaa]" /></div>
        <main className="w-[1020px] border border-t-0 border-[#b5b5b5] bg-white"><LandCover /></main>
      </div>
      <Status />
      <div className="flex h-[2px] bg-[#424242]"><div className="ml-[250px] w-[40px] bg-[#606060]" /></div>
    </div>
  );
}
